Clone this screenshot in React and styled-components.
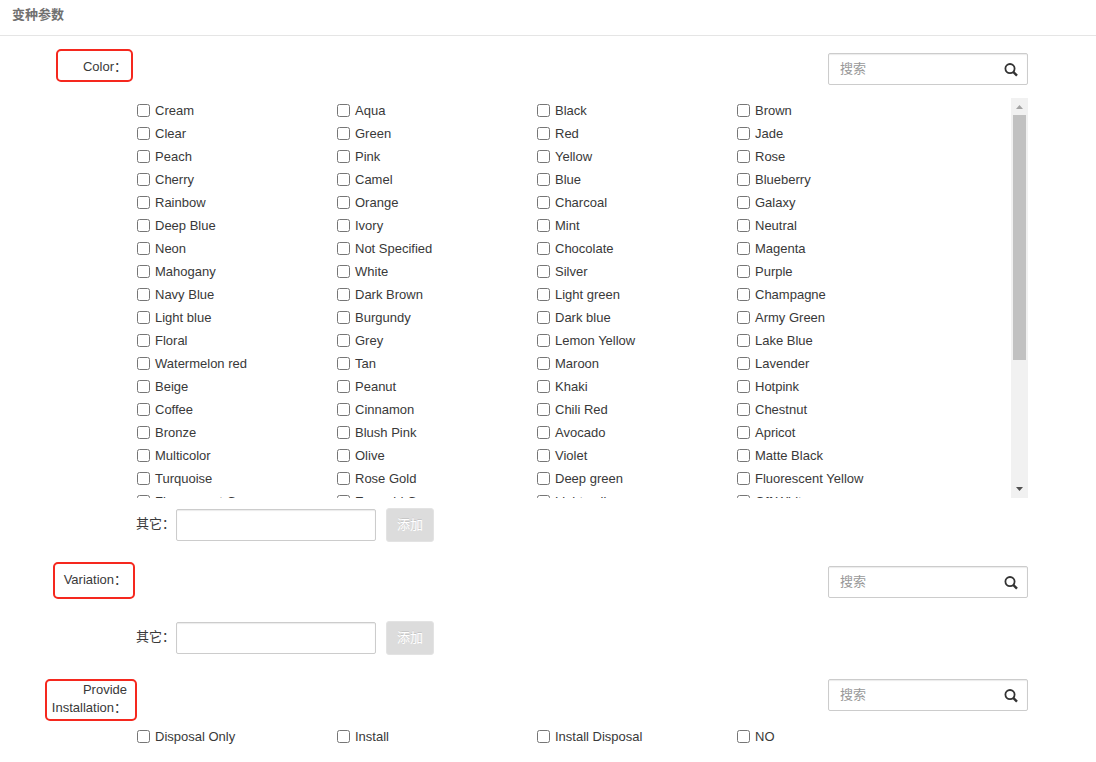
import React from "react";
import { createGlobalStyle, styled } from "styled-components";

const colors = [
  "Cream", "Aqua", "Black", "Brown",
  "Clear", "Green", "Red", "Jade",
  "Peach", "Pink", "Yellow", "Rose",
  "Cherry", "Camel", "Blue", "Blueberry",
  "Rainbow", "Orange", "Charcoal", "Galaxy",
  "Deep Blue", "Ivory", "Mint", "Neutral",
  "Neon", "Not Specified", "Chocolate", "Magenta",
  "Mahogany", "White", "Silver", "Purple",
  "Navy Blue", "Dark Brown", "Light green", "Champagne",
  "Light blue", "Burgundy", "Dark blue", "Army Green",
  "Floral", "Grey", "Lemon Yellow", "Lake Blue",
  "Watermelon red", "Tan", "Maroon", "Lavender",
  "Beige", "Peanut", "Khaki", "Hotpink",
  "Coffee", "Cinnamon", "Chili Red", "Chestnut",
  "Bronze", "Blush Pink", "Avocado", "Apricot",
  "Multicolor", "Olive", "Violet", "Matte Black",
  "Turquoise", "Rose Gold", "Deep green", "Fluorescent Yellow",
  "Fluorescent Green", "Emerald Green", "Light yellow", "Off White",
];

const installation = ["Disposal Only", "Install", "Install Disposal", "NO"];

export default function App() {
  return (
    <div lang="zh-CN">
      <GlobalStyle />
      <Header>变种参数</Header>
      <Main>
        <Section id="color" title="Color" frame="-7px -6px -7px -27px">
          <Options id="color" options={colors} scroll />
          <OtherValue id="color" />
        </Section>
        <Section id="variation" title="Variation" frame="-7px -8px -11px -11px">
          <Options id="variation" options={[]} />
          <OtherValue id="variation" />
        </Section>
        <Section
          id="installation"
          title="Provide Installation"
          frame="-3px -10px -5px 0"
        >
          <Options id="installation" options={installation} />
        </Section>
      </Main>
    </div>
  );
}

function Section({ id, title, frame, children }) {
  return (
    <SectionStyled aria-labelledby={`${id}-title`}>
      <SectionLabel>
        <LabelText id={`${id}-title`}>
          {title}：
          <Frame $inset={frame} />
        </LabelText>
      </SectionLabel>
      <SectionBody>
        <SearchBox>
          <input type="text" placeholder="搜索" aria-labelledby={`${id}-title`} />
          <button type="button" aria-label="搜索">
            <SearchIcon />
          </button>
        </SearchBox>
        {children}
      </SectionBody>
    </SectionStyled>
  );
}

function Options({ id, options, scroll }) {
  return (
    <OptionsStyled $scroll={scroll}>
      <OptionGrid>
        {options.map((name) => (
          <Option key={name}>
            <input type="checkbox" name={id} value={name} />
            {name}
          </Option>
        ))}
      </OptionGrid>
      {scroll && (
        <Scrollbar>
          <svg width="17" height="17" viewBox="0 0 17 17">
            <path d="M5 11L8.5 7L12 11Z" fill="#a3a3a3" />
          </svg>
          <Track>
            <Thumb />
          </Track>
          <svg width="17" height="17" viewBox="0 0 17 17">
            <path d="M5 6L8.5 10L12 6Z" fill="#505050" />
          </svg>
        </Scrollbar>
      )}
    </OptionsStyled>
  );
}

function OtherValue({ id }) {
  return (
    <OtherStyled>
      <label htmlFor={`${id}-other`}>其它：</label>
      <input id={`${id}-other`} type="text" />
      <button type="button">添加</button>
    </OtherStyled>
  );
}

function SearchIcon() {
  return (
    <svg width="14" height="14" viewBox="0 0 14 14" fill="none" stroke="#333">
      <circle cx="6" cy="5.6" r="4.6" strokeWidth="1.8" />
      <path d="M9.2 8.8L13 12.6" strokeWidth="2.4" />
    </svg>
  );
}

const GlobalStyle = createGlobalStyle`
  * {
    box-sizing: border-box;
  }
  body {
    margin: 0;
    background: #fff;
    color: #393939;
  }
  body, input, button {
    font-family: "Liberation Sans", Arial, "Noto Sans CJK SC", sans-serif;
    font-size: 13px;
  }
`;

const Header = styled.h1`
  margin: 0;
  padding: 0 12px;
  height: 36px;
  line-height: 30px;
  border-bottom: 1px solid #e5e5e5;
  color: #707070;
  font-size: 13px;
  font-weight: bold;
`;

const Main = styled.main`
  display: flex;
  flex-direction: column;
  gap: 24px;
  padding: 17px 68px 14px 0;
`;

const SectionStyled = styled.section`
  display: flex;
`;

const SectionLabel = styled.div`
  display: flex;
  flex: 0 0 136px;
  justify-content: flex-end;
  align-items: flex-start;
  padding: 3px 9px 0 45px;
  text-align: right;
`;

const LabelText = styled.div`
  position: relative;
`;

/* red marker drawn around the attribute name */
const Frame = styled.span`
  position: absolute;
  inset: ${(props) => props.$inset};
  border: 2px solid #f5281e;
  border-radius: 5px;
  pointer-events: none;
`;

const SectionBody = styled.div`
  flex: 1;
  min-width: 0;
`;

const SearchBox = styled.div`
  display: flex;
  width: 200px;
  height: 32px;
  margin-left: auto;
  border: 1px solid #ccc;
  border-radius: 2px;
  box-shadow: inset 0 1px 1px rgba(0, 0, 0, 0.08);
  input {
    flex: 1;
    min-width: 0;
    padding: 0 11px 2px;
    border: none;
    background: transparent;
    &::placeholder {
      color: #999;
    }
  }
  button {
    display: flex;
    align-items: center;
    padding: 2px 9px 0;
    border: none;
    background: transparent;
  }
`;

const OptionsStyled = styled.div`
  display: flex;
  height: ${(props) => (props.$scroll ? "400px" : "auto")};
  margin-top: 13px;
  overflow: hidden;
`;

const OptionGrid = styled.div`
  display: grid;
  flex: 1;
  grid-template-columns: repeat(auto-fill, 200px);
  grid-auto-rows: 23px;
  padding-top: 1px;
  &:empty {
    padding: 0;
  }
`;

const Option = styled.label`
  display: flex;
  align-items: center;
  input {
    width: 13px;
    height: 13px;
    margin: 0 5px 0 1px;
  }
`;

const Scrollbar = styled.div`
  display: flex;
  flex: 0 0 17px;
  flex-direction: column;
  background: #f1f1f1;
`;

const Track = styled.div`
  flex: 1;
  padding: 0 2px;
`;

const Thumb = styled.div`
  height: 67%;
  background: #c1c1c1;
`;

const OtherStyled = styled.div`
  display: flex;
  align-items: center;
  margin-top: 10px;
  label {
    width: 40px;
    padding-bottom: 6px;
  }
  input {
    width: 200px;
    height: 32px;
    padding: 0 8px;
    border: 1px solid #ccc;
    border-radius: 2px;
    box-shadow: inset 0 1px 1px rgba(0, 0, 0, 0.08);
  }
  button {
    width: 48px;
    height: 34px;
    margin-left: 10px;
    padding: 0 0 4px;
    border: 1px solid #e3e3e3;
    border-radius: 3px;
    background: #dcdcdc;
    color: #fff;
    text-shadow: 0 -1px 0 rgba(0, 0, 0, 0.1);
  }
`;
